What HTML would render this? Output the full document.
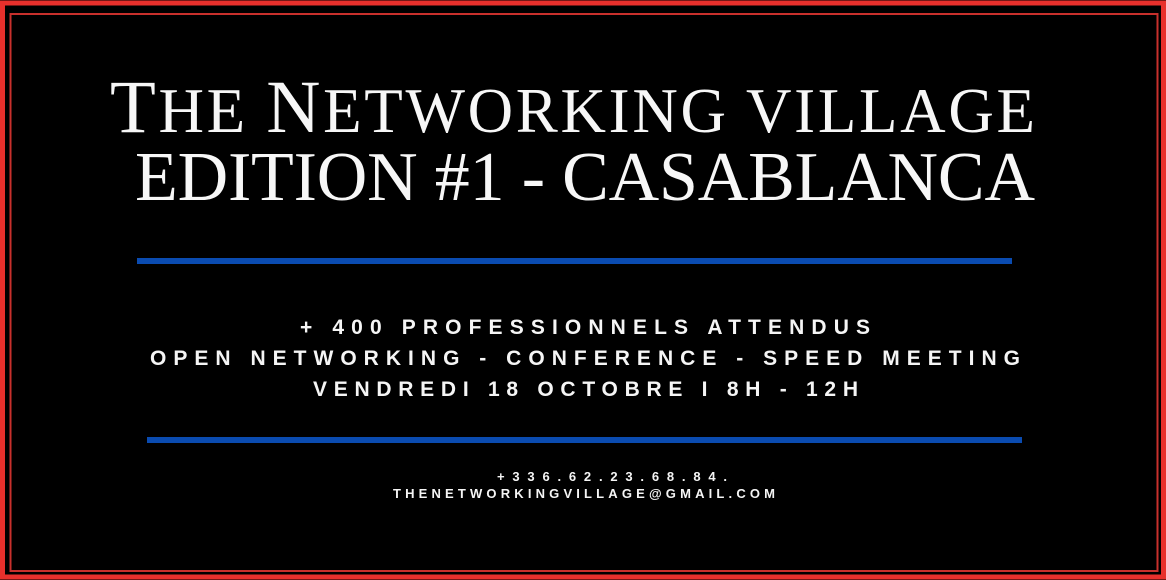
<!DOCTYPE html>
<html><head><meta charset="utf-8"><style>
html,body{margin:0;padding:0;background:#000;width:1166px;height:580px;overflow:hidden}
svg{display:block}
</style></head><body>
<svg width="1166" height="580" viewBox="0 0 1166 580" xmlns="http://www.w3.org/2000/svg">
<rect x="0" y="0" width="1166" height="580" fill="#000"/>
<rect x="2.5" y="3" width="1161" height="574" fill="none" stroke="#e8302c" stroke-width="5"/>
<rect x="10.5" y="14" width="1147" height="557" fill="none" stroke="#c8302c" stroke-width="2"/>
<g fill="#f7f7f7" font-family="Liberation Serif, serif">
<text x="110" y="132" font-size="75" textLength="925" lengthAdjust="spacing"><tspan>T</tspan><tspan font-size="63">HE </tspan><tspan>N</tspan><tspan font-size="63">ETWORKING VILLAGE</tspan></text>
<text x="135" y="200" font-size="70" textLength="900" lengthAdjust="spacing">EDITION #1 - CASABLANCA</text>
</g>
<rect x="137" y="258" width="875" height="6" fill="#0a4bb0"/>
<rect x="147" y="437" width="875" height="6" fill="#0a4bb0"/>
<g fill="#f5f5f5" font-family="Liberation Sans, sans-serif" font-weight="bold">
<text x="300" y="334" font-size="21" textLength="570" lengthAdjust="spacing">+ 400 PROFESSIONNELS ATTENDUS</text>
<text x="150" y="365" font-size="21" textLength="870" lengthAdjust="spacing">OPEN NETWORKING - CONFERENCE - SPEED MEETING</text>
<text x="313" y="396" font-size="21" textLength="545" lengthAdjust="spacing">VENDREDI 18 OCTOBRE I 8H - 12H</text>
<text x="497" y="481" font-size="13" textLength="230" lengthAdjust="spacing">+336.62.23.68.84.</text>
<text x="393" y="498" font-size="13" textLength="382" lengthAdjust="spacing">THENETWORKINGVILLAGE@GMAIL.COM</text>
</g>
</svg>
</body></html>
